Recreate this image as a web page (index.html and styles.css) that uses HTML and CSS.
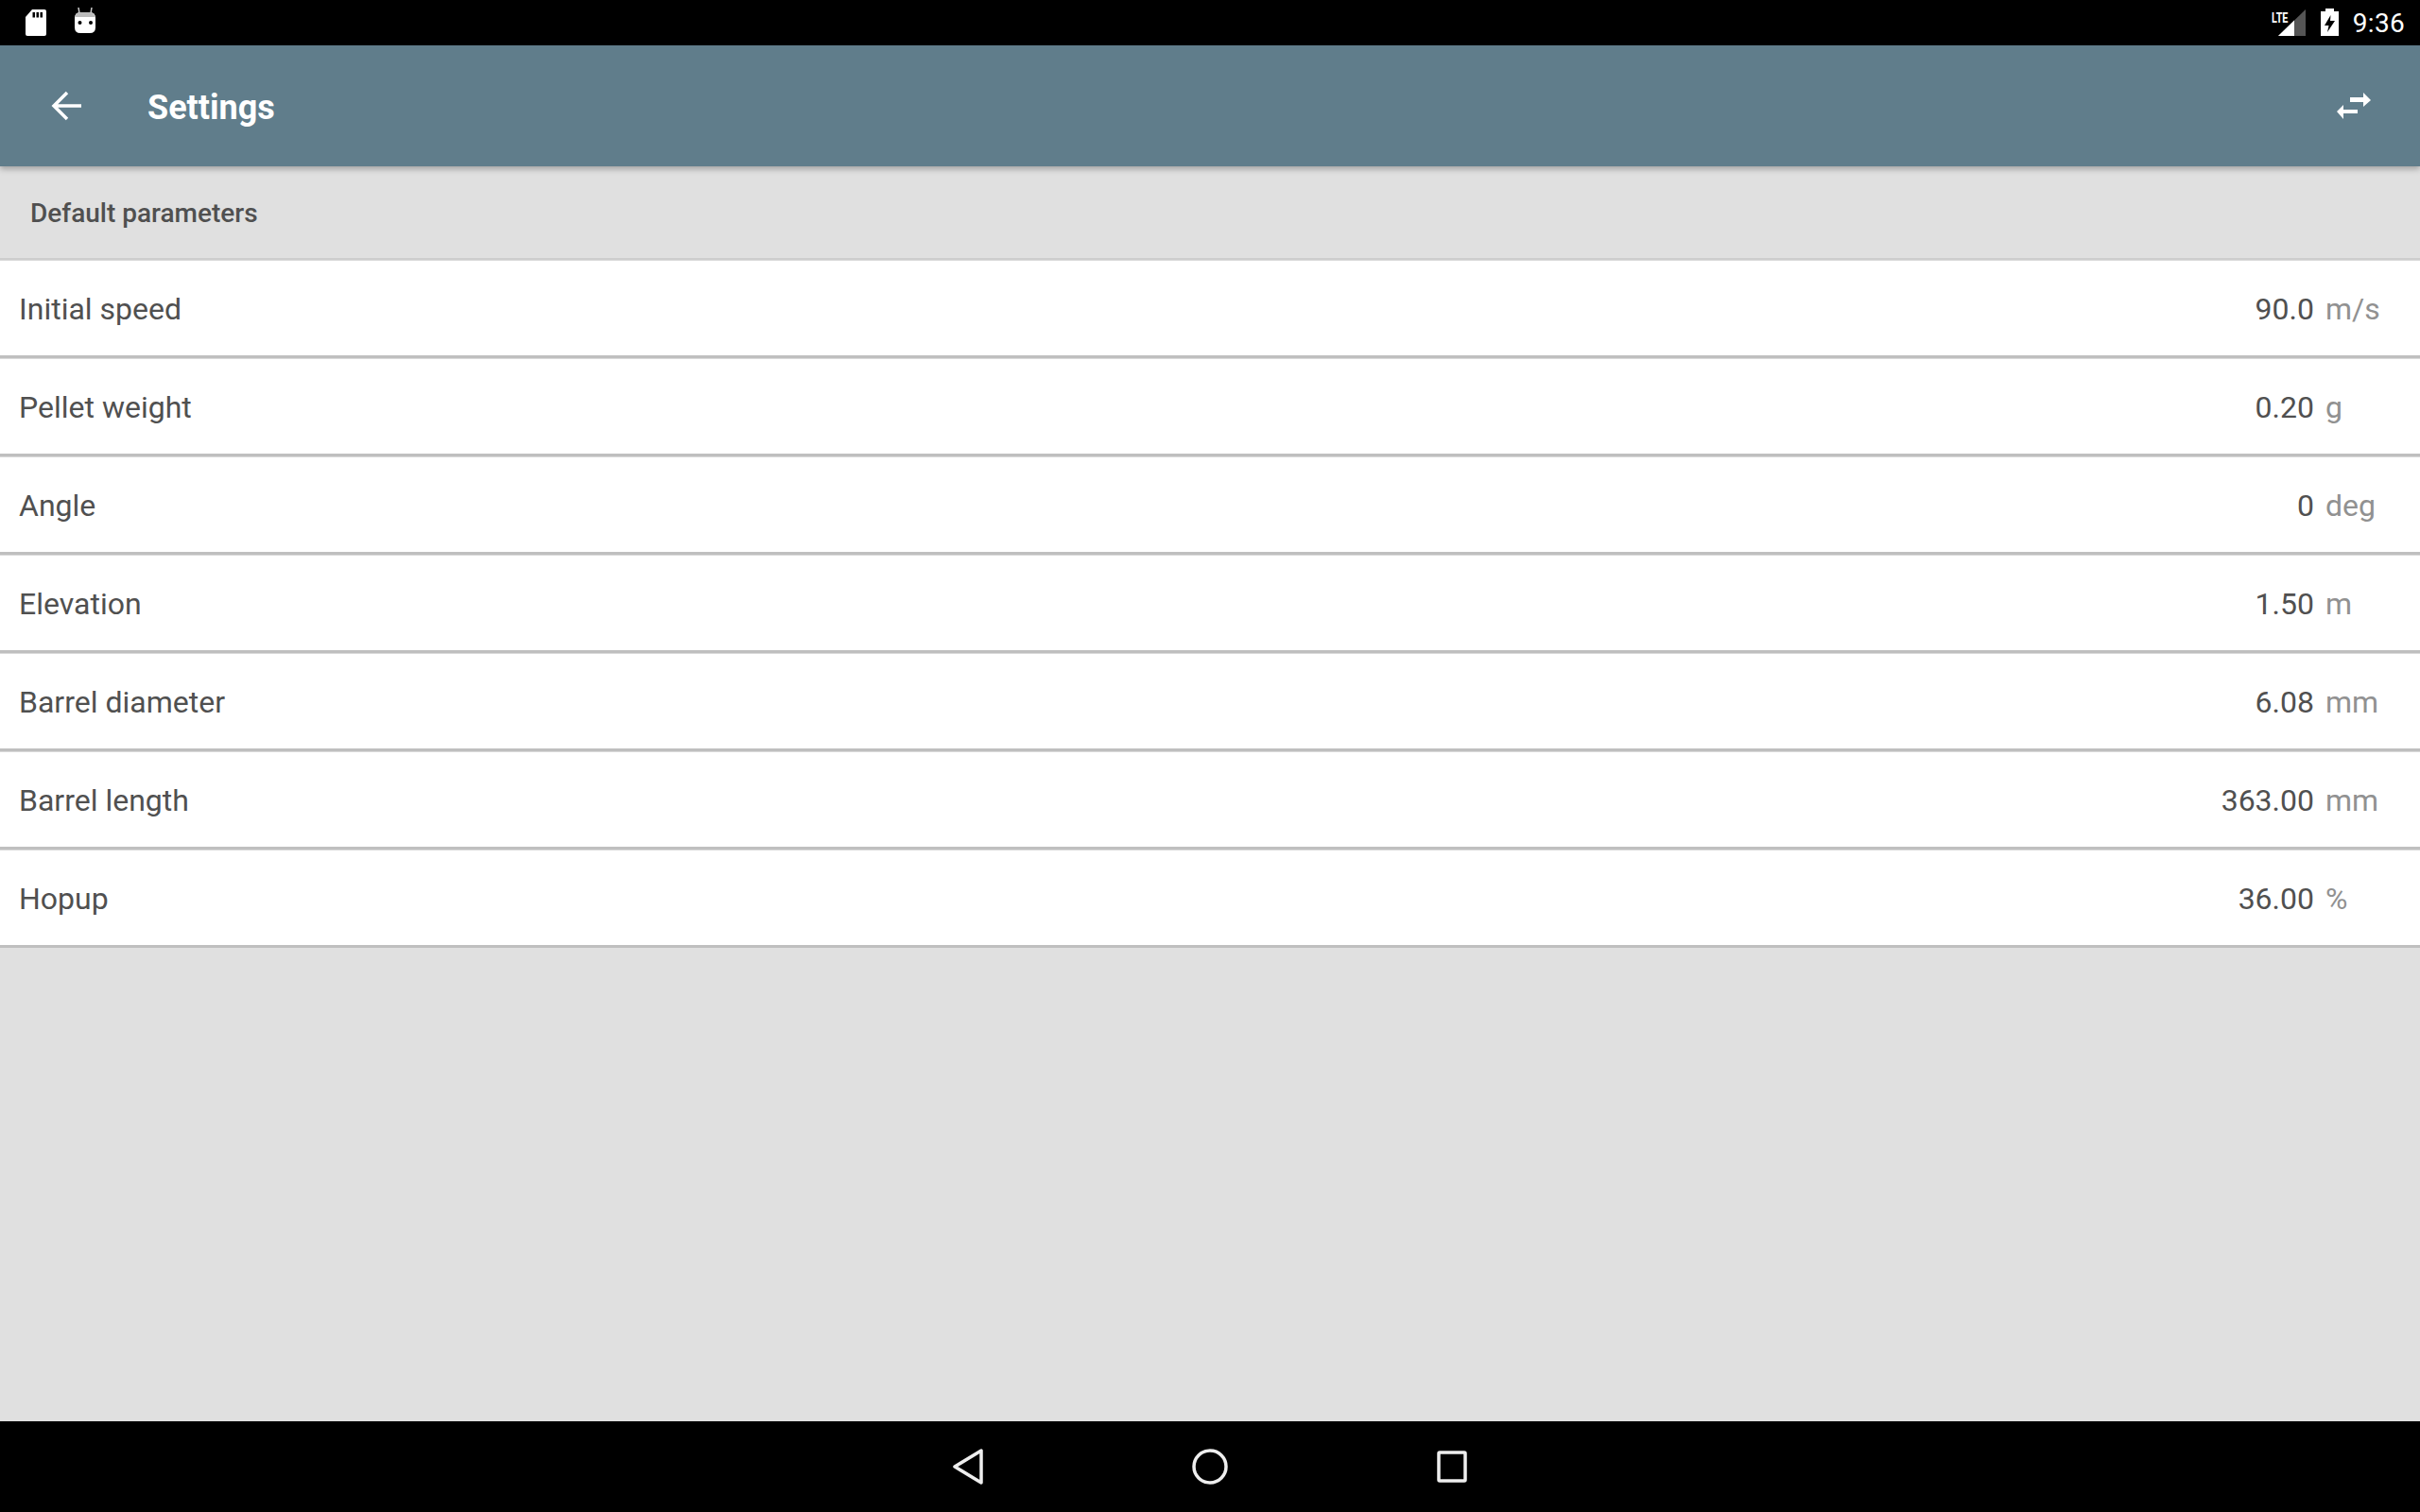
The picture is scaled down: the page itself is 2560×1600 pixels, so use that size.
FILE: index.html
```html
<!DOCTYPE html>
<html lang="en">
<head>
    <meta charset="UTF-8">
    <title>Settings</title>
    <link rel="stylesheet" href="styles.css">
</head>
<body>

    <!-- Status bar -->
    <div class="status-bar">
        <div class="status-left">
            <svg width="24" height="28" viewBox="0 0 24 28">
                <path d="M8 0H21Q23 0 23 2V26Q23 28 21 28H3Q1 28 1 26V8Z" fill="#fff"/>
                <rect x="8.500" y="3" width="2.500" height="5.500" fill="#000"/>
                <rect x="12.500" y="3" width="2.500" height="5.500" fill="#000"/>
                <rect x="16.500" y="3" width="2.500" height="5.500" fill="#000"/>
            </svg>
            <svg width="24" height="32" viewBox="0 0 24 32">
                <path d="M5 0L6 6M19 0L18 6" stroke="#ccc" stroke-width="1.500" fill="none"/>
                <path d="M1 11Q1 5 7 5H17Q23 5 23 11V21Q23 27 17 27H7Q1 27 1 21Z" fill="#fff"/>
                <path d="M1.500 10Q2 5 7 5H17Q22 5 22.500 10Z" fill="#bbb"/>
                <circle cx="6.500" cy="16" r="2" fill="#000"/>
                <circle cx="18" cy="16" r="2" fill="#000"/>
            </svg>
        </div>
        <div class="status-right">
            <span class="lte">LTE</span>
            <svg width="29" height="28" viewBox="0 0 29 28">
                <path d="M29 0V28H0Z" fill="#555"/>
                <path d="M17 11.500V28H0Z" fill="#fff"/>
            </svg>
            <svg class="icon-battery" width="19" height="30" viewBox="0 0 19 30">
                <path d="M5 0H14V3H19V29H0V3H5Z" fill="#fff"/>
                <path d="M10.500 7L4 18H8.500L7 25L15 13H10Z" fill="#000"/>
            </svg>
            <span class="clock">9:36</span>
        </div>
    </div>

    <!-- Toolbar -->
    <nav class="toolbar">
        <svg width="36" height="36" viewBox="0 0 36 36">
            <path d="M34 18H5M19 4L5 18L19 32" stroke="#fff" stroke-width="3.500" fill="none"/>
        </svg>
        <span class="toolbar-title">Settings</span>
        <svg width="36" height="28" viewBox="0 0 36 28">
            <path d="M14 5H28V0L36 8L28 15V10H14Z" fill="#fff"/>
            <path d="M22 18H7V13L0 20L7 28V22H22Z" fill="#fff"/>
        </svg>
    </nav>

    <div class="content">
        <div class="section-title">Default parameters</div>

        <div class="param-list">
            <div class="param-row">
                <span class="param-name">Initial speed</span>
                <span class="param-value">90.0</span>
                <span class="param-unit">m/s</span>
            </div>
            <div class="param-row">
                <span class="param-name">Pellet weight</span>
                <span class="param-value">0.20</span>
                <span class="param-unit">g</span>
            </div>
            <div class="param-row">
                <span class="param-name">Angle</span>
                <span class="param-value">0</span>
                <span class="param-unit">deg</span>
            </div>
            <div class="param-row">
                <span class="param-name">Elevation</span>
                <span class="param-value">1.50</span>
                <span class="param-unit">m</span>
            </div>
            <div class="param-row">
                <span class="param-name">Barrel diameter</span>
                <span class="param-value">6.08</span>
                <span class="param-unit">mm</span>
            </div>
            <div class="param-row">
                <span class="param-name">Barrel length</span>
                <span class="param-value">363.00</span>
                <span class="param-unit">mm</span>
            </div>
            <div class="param-row">
                <span class="param-name">Hopup</span>
                <span class="param-value">36.00</span>
                <span class="param-unit">%</span>
            </div>
        </div>
    </div>

    <!-- Navigation bar -->
    <div class="system-nav">
        <svg width="32" height="38" viewBox="0 0 32 38">
            <path d="M30 2V36L2 19Z" stroke="#eee" stroke-width="3.500" stroke-linejoin="round" fill="none"/>
        </svg>
        <svg width="38" height="38" viewBox="0 0 38 38">
            <circle cx="19" cy="19" r="17" stroke="#eee" stroke-width="3.500" fill="none"/>
        </svg>
        <svg width="32" height="34" viewBox="0 0 32 34">
            <rect x="2" y="2" width="28" height="30" rx="1" stroke="#eee" stroke-width="3.500" fill="none"/>
        </svg>
    </div>

</body>
</html>
```

FILE: styles.css
```css
* {
    box-sizing: border-box;
}

body {
    margin: 0;
    width: 2560px;
    height: 1600px;
    display: flex;
    flex-direction: column;
    font-family: Roboto, sans-serif;
    background-color: #e0e0e0;
    overflow: hidden;
}

/* Status bar */
.status-bar {
    height: 48px;
    background-color: #000;
    display: flex;
    justify-content: space-between;
    align-items: center;
    padding: 0 16px 0 26px;
}

.status-left {
    display: flex;
    align-items: center;
    gap: 28px;
}

.status-right {
    position: relative;
    display: flex;
    align-items: center;
    color: #fff;
}

.lte {
    position: absolute;
    left: -7px;
    top: 2px;
    font-size: 15px;
    line-height: 18px;
    font-weight: 700;
    transform: scaleX(0.72);
    transform-origin: left center;
}

.icon-battery {
    margin-left: 16px;
}

.clock {
    margin-left: 15px;
    font-size: 28px;
    letter-spacing: 0.3px;
}

/* Toolbar */
.toolbar {
    height: 128px;
    background-color: #607d8b;
    display: flex;
    align-items: center;
    padding: 0 52px;
    position: relative;
    z-index: 10;
    box-shadow: 0 3px 6px rgba(0, 0, 0, 0.28);
}

.toolbar-title {
    margin-left: 68px;
    padding-top: 4px;
    flex: 1;
    font-size: 36px;
    font-weight: 700;
    color: #fff;
}

/* Content section */
.content {
    flex: 1;
}

.section-title {
    height: 97px;
    padding: 2px 32px 0;
    display: flex;
    align-items: center;
    font-size: 28px;
    font-weight: 500;
    color: #505050;
}

.param-list {
    border-top: 2px solid #cdcdcd;
}

.param-row {
    height: 104px;
    padding: 2px 0 0 20px;
    background-color: #fff;
    border-bottom: 3px solid #bfbfbf;
    box-shadow: inset 0 1px 0 #dadada;
    display: flex;
    align-items: center;
    font-size: 32px;
}

.param-name {
    flex: 1;
    color: #505050;
}

.param-value {
    color: #505050;
}

.param-unit {
    width: 112px;
    padding-left: 12px;
    color: #919191;
}

/* Navigation bar */
.system-nav {
    height: 96px;
    background-color: #000;
    display: flex;
    align-items: center;
    justify-content: center;
    gap: 221px;
}
```
